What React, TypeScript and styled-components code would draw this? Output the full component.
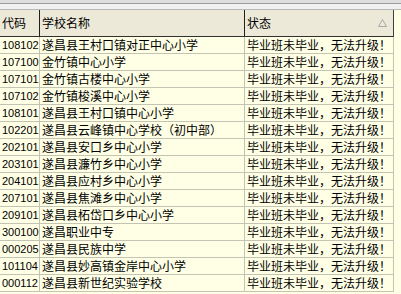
import React from "react";
import styled, { createGlobalStyle } from "styled-components";

const Global = createGlobalStyle`
  html, body { margin: 0; padding: 0; }
  body {
    width: 401px;
    height: 294px;
    overflow: hidden;
    background: #ffffe6;
    font-family: "Noto Sans CJK SC", sans-serif;
  }
`;

const Page = styled.div`
  display: flex;
  flex-direction: column;
  width: 401px;
  height: 294px;
  overflow: hidden;
`;

const TopStrip = styled.div`
  height: 3px;
  background: #dedede;
  border-bottom: 1px solid #9c9c9c;
`;

const TopGap = styled.div`
  height: 5px;
  background: #f1f1f1;
  border-bottom: 1px solid #b8b8b8;
`;

const Grid = styled.div`
  display: grid;
  grid-template-columns: 40px 205px 149px;
  width: 394px;
`;

const HeadCell = styled.div<{ $last?: boolean }>`
  height: 27px;
  box-sizing: border-box;
  background: #ece9d8;
  border-right: 1px solid ${(p) => (p.$last ? "#404040" : "#202020")};
  border-bottom: 1px solid #303030;
  display: flex;
  align-items: center;
  justify-content: space-between;
  padding: 0 6px 0 2px;
  font-size: 12px;
  color: #000;
  line-height: 1;
  position: relative;
`;

const SortMark = styled.svg`
  width: 9px;
  height: 8px;
`;

const Cell = styled.div<{ $num?: boolean }>`
  height: 17px;
  box-sizing: border-box;
  border-right: 1px solid #c4c4b4;
  border-bottom: 1px solid #c4c4b4;
  background: #ffffe6;
  display: flex;
  align-items: center;
  padding-left: 2px;
  white-space: nowrap;
  overflow: hidden;
  color: #000;
  font-family: ${(p) =>
    p.$num ? '"Liberation Sans", Arial, sans-serif' : '"Noto Sans CJK SC", sans-serif'};
  font-size: ${(p) => (p.$num ? "11px" : "12px")};
  line-height: 1;
`;

const rows: [string, string][] = [
  ["108102", "遂昌县王村口镇对正中心小学"],
  ["107100", "金竹镇中心小学"],
  ["107101", "金竹镇古楼中心小学"],
  ["107102", "金竹镇梭溪中心小学"],
  ["108101", "遂昌县王村口镇中心小学"],
  ["102201", "遂昌县云峰镇中心学校（初中部）"],
  ["202101", "遂昌县安口乡中心小学"],
  ["203101", "遂昌县濂竹乡中心小学"],
  ["204101", "遂昌县应村乡中心小学"],
  ["207101", "遂昌县焦滩乡中心小学"],
  ["209101", "遂昌县柘岱口乡中心小学"],
  ["300100", "遂昌职业中专"],
  ["000205", "遂昌县民族中学"],
  ["101104", "遂昌县妙高镇金岸中心小学"],
  ["000112", "遂昌县新世纪实验学校"],
];

const STATUS = "毕业班未毕业，无法升级！";

export default function App() {
  return (
    <Page>
      <Global />
      <TopStrip />
      <TopGap />
      <Grid>
        <HeadCell>代码</HeadCell>
        <HeadCell>学校名称</HeadCell>
        <HeadCell $last>
          <span>状态</span>
          <SortMark viewBox="0 0 9 8">
            <path d="M4.5 0.5 L8.5 7.5 L0.5 7.5 Z" fill="none" stroke="#a8a8a8" strokeWidth="1" />
          </SortMark>
        </HeadCell>
        {rows.map(([code, name]) => (
          <React.Fragment key={code}>
            <Cell $num>{code}</Cell>
            <Cell>{name}</Cell>
            <Cell>{STATUS}</Cell>
          </React.Fragment>
        ))}
      </Grid>
    </Page>
  );
}
